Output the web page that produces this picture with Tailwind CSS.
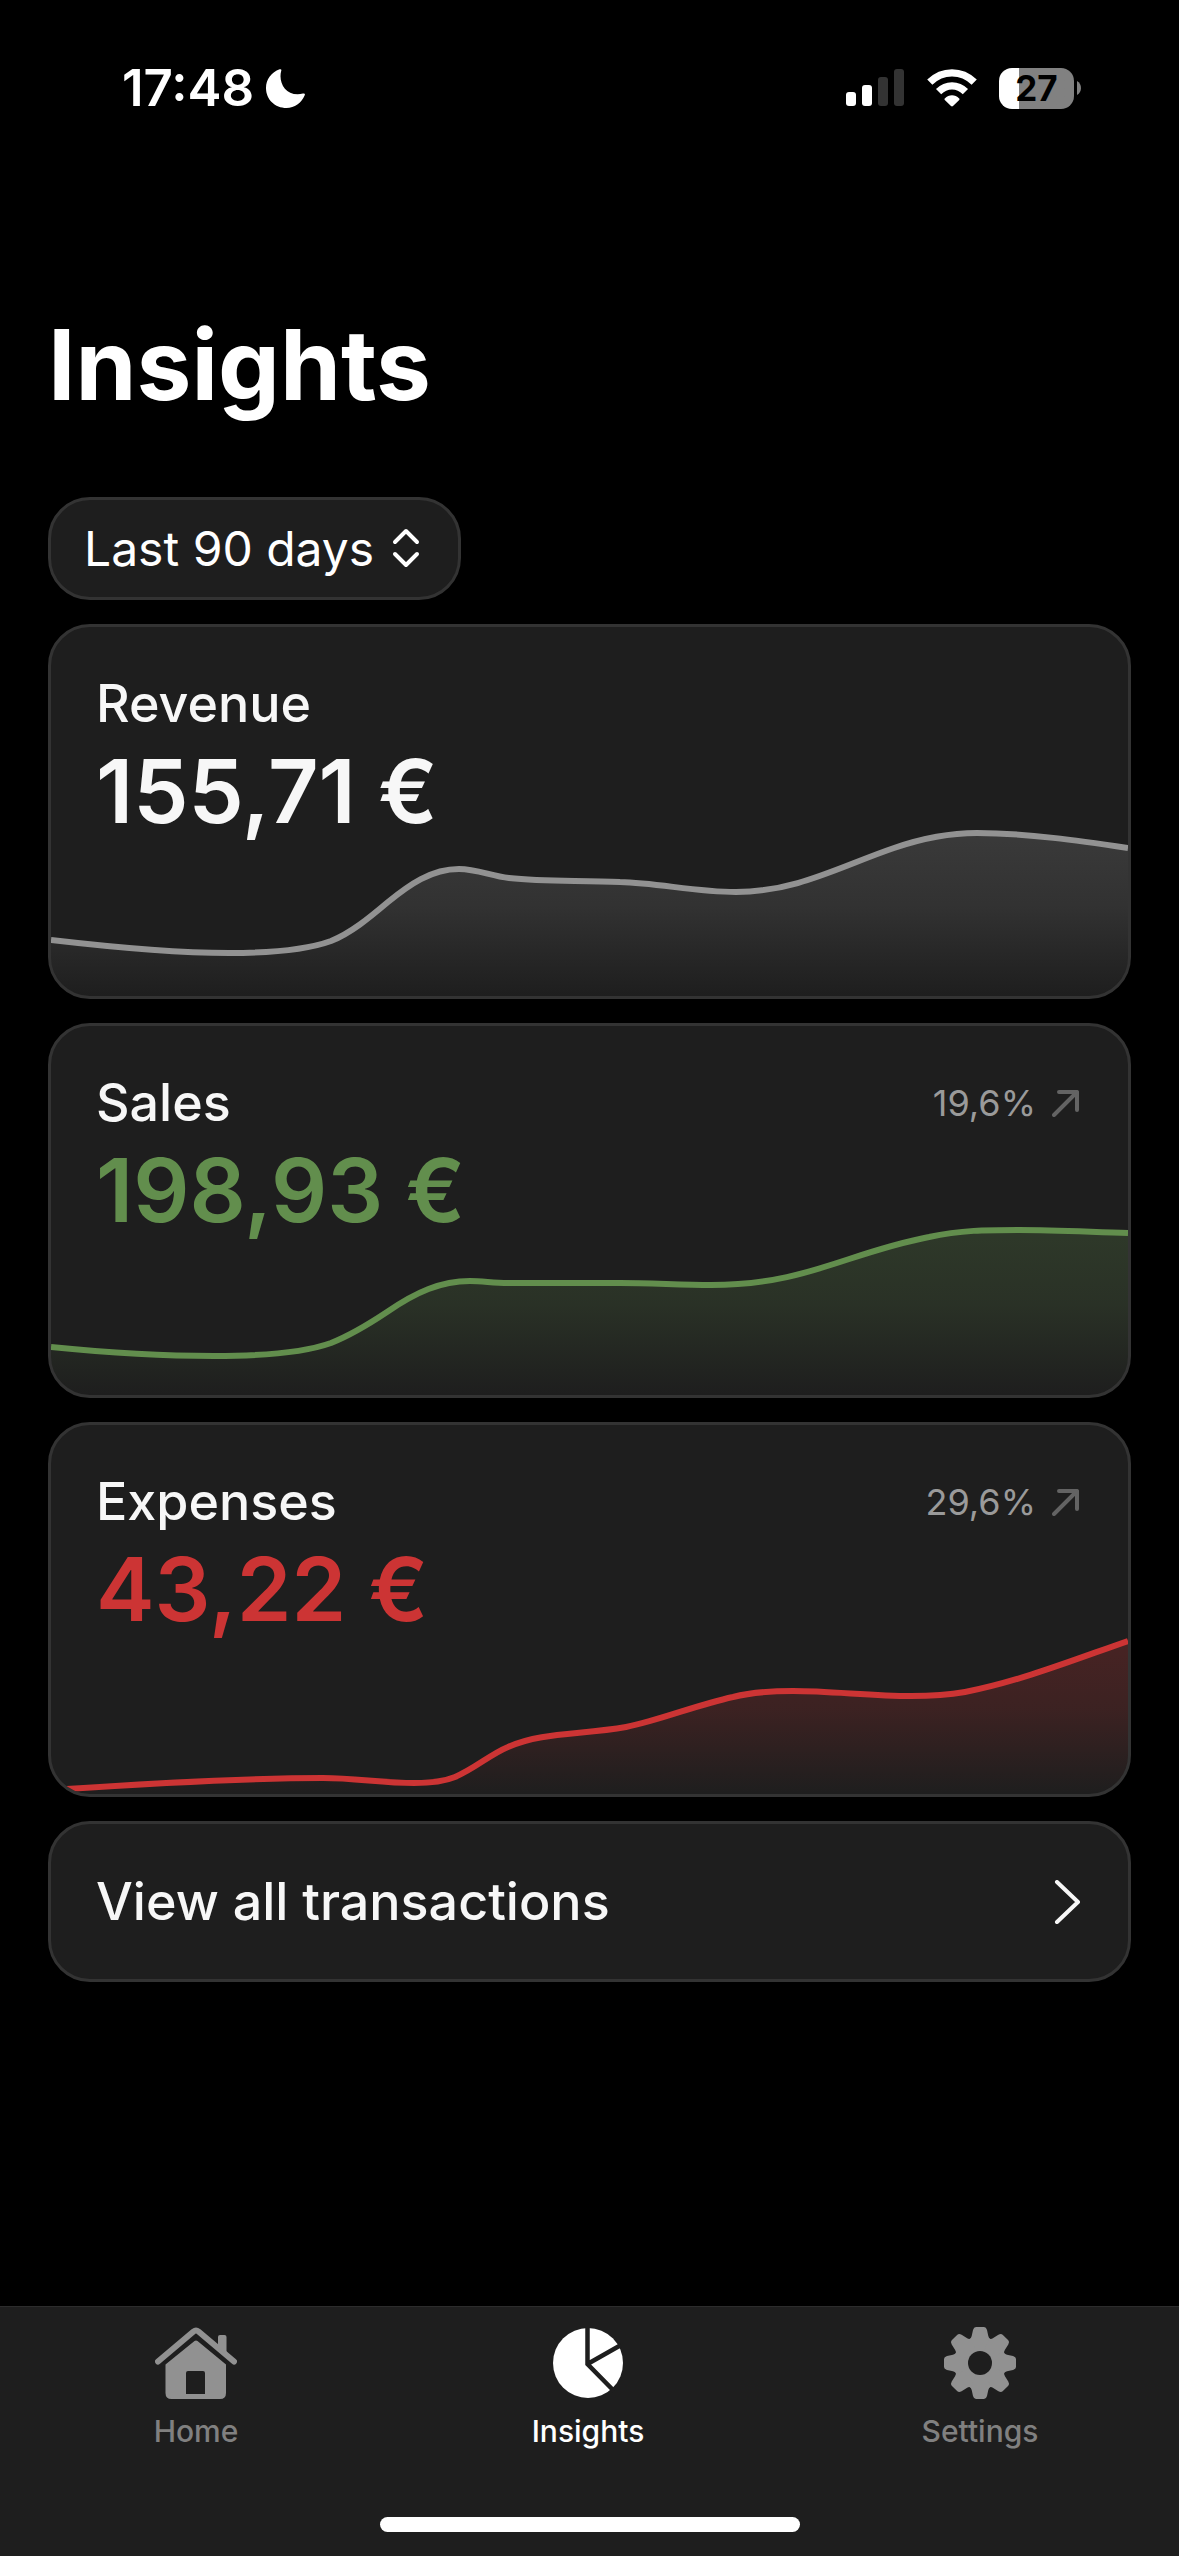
<!DOCTYPE html>
<html lang="en">
<head>
    <meta charset="UTF-8">
    <title>Insights</title>
    <meta name="viewport" content="width=device-width, initial-scale=1.0">
    <!-- Tailwind CSS -->
    <script src="https://cdn.jsdelivr.net/npm/@tailwindcss/browser@4"></script>
</head>
<body class="bg-black text-white font-['Inter','Liberation_Sans',sans-serif] flex flex-col min-h-screen">
    <!-- Status bar -->
    <header class="flex justify-between items-center pt-[58px] pl-[122px] pr-[98px]">
        <div class="flex items-center gap-[12px]">
            <span class="text-[51px] leading-[60px] font-semibold">17:48</span>
            <svg class="w-[39px] h-[39px]" viewBox="0 0 39 39" fill="#fff" aria-label="Do not disturb">
                <path d="M13.6 0.3C15 -0.2 15.7 0.4 15.2 2C12 13.5 20 28.5 37 24.6C38.7 24.2 39.3 25 38.7 26.3C35.5 34 28.5 39 20.5 39C9 39 0 30.5 0 19C0 10.5 5.5 3.2 13.6 0.3Z"/>
            </svg>
        </div>
        <div class="flex items-center">
            <svg class="w-[58px] h-[38px]" viewBox="0 0 58 38" aria-label="Signal">
                <rect x="0" y="23" width="10" height="14" rx="3" fill="#fff"/>
                <rect x="16" y="16" width="10" height="21" rx="3" fill="#fff"/>
                <rect x="32" y="8" width="10" height="29" rx="3" fill="#333"/>
                <rect x="48" y="0" width="10" height="37" rx="3" fill="#333"/>
            </svg>
            <svg class="w-[50px] h-[38px] ml-[23px]" viewBox="0 0 50 38" aria-label="Wi-Fi">
                <g fill="none" stroke="#fff" stroke-width="7.4">
                    <path d="M2.8 13.2C15.5 0.8 34.5 0.8 47.2 13.2"/>
                    <path d="M11.6 22.6C19.3 14.9 30.7 14.9 38.4 22.6"/>
                </g>
                <path d="M17.8 29.6C22 25.2 28 25.2 32.2 29.6C32.7 30.1 32.6 30.6 32.2 31L26 37C25.3 37.6 24.7 37.6 24 37L17.8 31C17.4 30.6 17.3 30.1 17.8 29.6Z" fill="#fff"/>
            </svg>
            <div class="ml-[22px] w-[75px] h-[41px] rounded-[13px] bg-linear-to-r from-white from-[20px] to-[#818181] to-[20px] text-black text-[35px] leading-[41px] font-bold text-center">27</div>
            <svg class="w-[4px] h-[14px] ml-[3px]" viewBox="0 0 4 14" fill="#818181"><path d="M0 0C5.3 2.5 5.3 11.5 0 14Z"/></svg>
        </div>
    </header>

    <main class="flex-1 flex flex-col gap-6 px-12 pt-[187px] pb-12">
        <h1 class="text-[98px] leading-[120px] font-bold mb-12">Insights</h1>

        <div class="relative w-[413px]">
            <select aria-label="Period" class="block w-full h-[103px] appearance-none rounded-[42px] border-[3px] border-[#333] bg-[#1e1e1e] pl-[33px] text-[48px] leading-[60px] text-white">
                <option>Last 30 days</option>
                <option selected>Last 90 days</option>
                <option>Last 12 months</option>
            </select>
            <svg class="absolute right-[41px] top-[31px] w-[28px] h-[40px] pointer-events-none" viewBox="0 0 28 40" fill="none" stroke="#fff" stroke-width="4" stroke-linecap="round" stroke-linejoin="round">
                <path d="M3 14L14 3L25 14M3 26L14 37L25 26"/>
            </svg>
        </div>

        <!-- Revenue -->
        <section class="relative overflow-hidden min-h-[375px] rounded-[42px] border-[3px] border-[#333] bg-[#1e1e1e] pt-[42px] pl-[45px] pr-[49px]">
            <svg class="absolute inset-0 w-full h-full" viewBox="0 0 1077 369" preserveAspectRatio="none" fill="none">
                <defs>
                    <linearGradient id="revenue" x1="0" y1="0" x2="0" y2="1">
                        <stop offset="0" stop-color="#929292" stop-opacity=".24"/>
                        <stop offset=".45" stop-color="#929292" stop-opacity=".17"/>
                        <stop offset="1" stop-color="#929292" stop-opacity="0"/>
                    </linearGradient>
                </defs>
                <path fill="url(#revenue)" d="M0 313C60 320 120 326 178 326C220 326 258 322 280 314C300 306 318 291 337 275C358 258 380 242 408 242C426 242 440 249 458 251C494 255 530 253 569 255C607 256 645 265 685 265C745 265 790 239 843 221C872 211 898 206 926 206C975 206 1030 214 1077 221V369H0Z"/>
                <path stroke="#929292" stroke-width="6" d="M0 313C60 320 120 326 178 326C220 326 258 322 280 314C300 306 318 291 337 275C358 258 380 242 408 242C426 242 440 249 458 251C494 255 530 253 569 255C607 256 645 265 685 265C745 265 790 239 843 221C872 211 898 206 926 206C975 206 1030 214 1077 221"/>
            </svg>
            <div class="relative">
                <h2 class="text-[52px] leading-[70px] font-medium text-[#f7f7f7]">Revenue</h2>
                <p class="text-[88px] leading-[104px] font-semibold text-[#f7f7f7]">155,71 €</p>
            </div>
        </section>

        <!-- Sales -->
        <section class="relative overflow-hidden min-h-[375px] rounded-[42px] border-[3px] border-[#333] bg-[#1e1e1e] pt-[42px] pl-[45px] pr-[49px]">
            <svg class="absolute inset-0 w-full h-full" viewBox="0 0 1077 369" preserveAspectRatio="none" fill="none">
                <defs>
                    <linearGradient id="sales" x1="0" y1="0" x2="0" y2="1">
                        <stop offset="0" stop-color="#628e4d" stop-opacity=".24"/>
                        <stop offset=".45" stop-color="#628e4d" stop-opacity=".17"/>
                        <stop offset="1" stop-color="#628e4d" stop-opacity="0"/>
                    </linearGradient>
                </defs>
                <path fill="url(#sales)" d="M0 321C60 327 110 330 163 330C220 330 255 326 280 317C300 309 318 298 336 286C365 266 390 255 419 255C432 255 442 257 457 257H569C600 257 630 259 660 259C755 259 795 227 878 211C910 204 935 204 968 204C1005 204 1040 206 1077 207V369H0Z"/>
                <path stroke="#628e4d" stroke-width="6" d="M0 321C60 327 110 330 163 330C220 330 255 326 280 317C300 309 318 298 336 286C365 266 390 255 419 255C432 255 442 257 457 257H569C600 257 630 259 660 259C755 259 795 227 878 211C910 204 935 204 968 204C1005 204 1040 206 1077 207"/>
            </svg>
            <div class="relative">
                <div class="flex justify-between items-center">
                    <h2 class="text-[52px] leading-[70px] font-medium text-[#f7f7f7]">Sales</h2>
                    <div class="flex items-center gap-4">
                        <span class="text-[36px] leading-[48px] text-[#9a9a9a]">19,6%</span>
                        <svg class="w-[27px] h-[27px]" viewBox="0 0 27 27" fill="none" stroke="#636363" stroke-width="4" stroke-linecap="round" stroke-linejoin="round"><path d="M2 25L25 2M7 2H25V20"/></svg>
                    </div>
                </div>
                <p class="text-[88px] leading-[104px] font-semibold text-[#628e4d]">198,93 €</p>
            </div>
        </section>

        <!-- Expenses -->
        <section class="relative overflow-hidden min-h-[375px] rounded-[42px] border-[3px] border-[#333] bg-[#1e1e1e] pt-[42px] pl-[45px] pr-[49px]">
            <svg class="absolute inset-0 w-full h-full" viewBox="0 0 1077 369" preserveAspectRatio="none" fill="none">
                <defs>
                    <linearGradient id="expenses" x1="0" y1="0" x2="0" y2="1">
                        <stop offset="0" stop-color="#cc3434" stop-opacity=".24"/>
                        <stop offset=".45" stop-color="#cc3434" stop-opacity=".17"/>
                        <stop offset="1" stop-color="#cc3434" stop-opacity="0"/>
                    </linearGradient>
                </defs>
                <path fill="url(#expenses)" d="M0 365C90 359 190 353 272 353C305 353 330 358 363 358C380 358 392 357 404 352C425 343 438 330 457 322C490 307 530 310 575 302C610 295 645 280 682 272C702 267 720 266 742 266C780 266 820 271 860 271C880 271 897 270 914 267C970 256 1025 234 1077 216V369H0Z"/>
                <path stroke="#cc3434" stroke-width="6" d="M0 365C90 359 190 353 272 353C305 353 330 358 363 358C380 358 392 357 404 352C425 343 438 330 457 322C490 307 530 310 575 302C610 295 645 280 682 272C702 267 720 266 742 266C780 266 820 271 860 271C880 271 897 270 914 267C970 256 1025 234 1077 216"/>
            </svg>
            <div class="relative">
                <div class="flex justify-between items-center">
                    <h2 class="text-[52px] leading-[70px] font-medium text-[#f7f7f7]">Expenses</h2>
                    <div class="flex items-center gap-4">
                        <span class="text-[36px] leading-[48px] text-[#9a9a9a]">29,6%</span>
                        <svg class="w-[27px] h-[27px]" viewBox="0 0 27 27" fill="none" stroke="#636363" stroke-width="4" stroke-linecap="round" stroke-linejoin="round"><path d="M2 25L25 2M7 2H25V20"/></svg>
                    </div>
                </div>
                <p class="text-[88px] leading-[104px] font-semibold text-[#cc3434]">43,22 €</p>
            </div>
        </section>

        <a href="#transactions" class="flex justify-between items-center min-h-[161px] rounded-[42px] border-[3px] border-[#333] bg-[#1e1e1e] pl-[45px] pr-[47px] text-[52px] leading-[70px] font-medium text-[#f7f7f7]">
            View all transactions
            <svg class="w-[27px] h-[44px]" viewBox="0 0 27 44" fill="none" stroke="#f7f7f7" stroke-width="4" stroke-linecap="round" stroke-linejoin="round"><path d="M3 2L24 22L3 42"/></svg>
        </a>
    </main>

    <!-- Tab bar -->
    <footer class="border-t border-[#2c2c2c] bg-[#1e1e1e] pt-5 pb-6">
        <nav class="grid grid-cols-3 pr-[3px] text-[30px] leading-[40px] font-medium text-[#808080]">
            <a href="#home" class="flex flex-col items-center gap-3">
                <svg class="w-[82px] h-[72px]" viewBox="0 0 82 72" fill="#919191">
                    <path d="M3 34.5L38.5 4.5Q41 2.5 43.5 4.5L79 34.5" fill="none" stroke="#919191" stroke-width="6" stroke-linecap="round"/>
                    <path d="M63 20V10Q63 8 65 8H69.5Q71.5 8 71.5 10V30Z"/>
                    <path fill-rule="evenodd" d="M39.5 14Q41 12.8 42.5 14L71 37.5V66Q71 72 65 72H16.5Q10.5 72 10.5 66V37.5ZM33 44Q31 44 31 46V67H50V46Q50 44 48 44Z"/>
                </svg>
                Home
            </a>
            <a href="#insights" aria-current="page" class="flex flex-col items-center gap-3 text-white">
                <svg class="w-[72px] h-[72px]" viewBox="0 0 72 72">
                    <circle cx="36" cy="36" r="35" fill="#fff"/>
                    <path d="M35.5 0V37L62 64M35.5 37L69 18" fill="none" stroke="#1e1e1e" stroke-width="4.5"/>
                </svg>
                Insights
            </a>
            <a href="#settings" class="flex flex-col items-center gap-3">
                <svg class="w-[72px] h-[72px]" viewBox="0 0 72 72" fill="#919191">
                    <defs>
                        <path id="tooth" d="M25 12.5Q27.3 11.5 27.7 9L29 3Q29.8 0 32 0H40Q42.2 0 43 3L44.3 9Q44.7 11.5 47 12.5L36 36Z"/>
                    </defs>
                    <circle cx="36" cy="36" r="25.5"/>
                    <use href="#tooth"/>
                    <use href="#tooth" transform="rotate(45 36 36)"/>
                    <use href="#tooth" transform="rotate(90 36 36)"/>
                    <use href="#tooth" transform="rotate(135 36 36)"/>
                    <use href="#tooth" transform="rotate(180 36 36)"/>
                    <use href="#tooth" transform="rotate(225 36 36)"/>
                    <use href="#tooth" transform="rotate(270 36 36)"/>
                    <use href="#tooth" transform="rotate(315 36 36)"/>
                    <circle cx="36" cy="36" r="12" fill="#1e1e1e"/>
                </svg>
                Settings
            </a>
        </nav>
        <div class="mx-auto mt-[66px] w-[420px] h-[15px] rounded-full bg-white"></div>
    </footer>
</body>
</html>
